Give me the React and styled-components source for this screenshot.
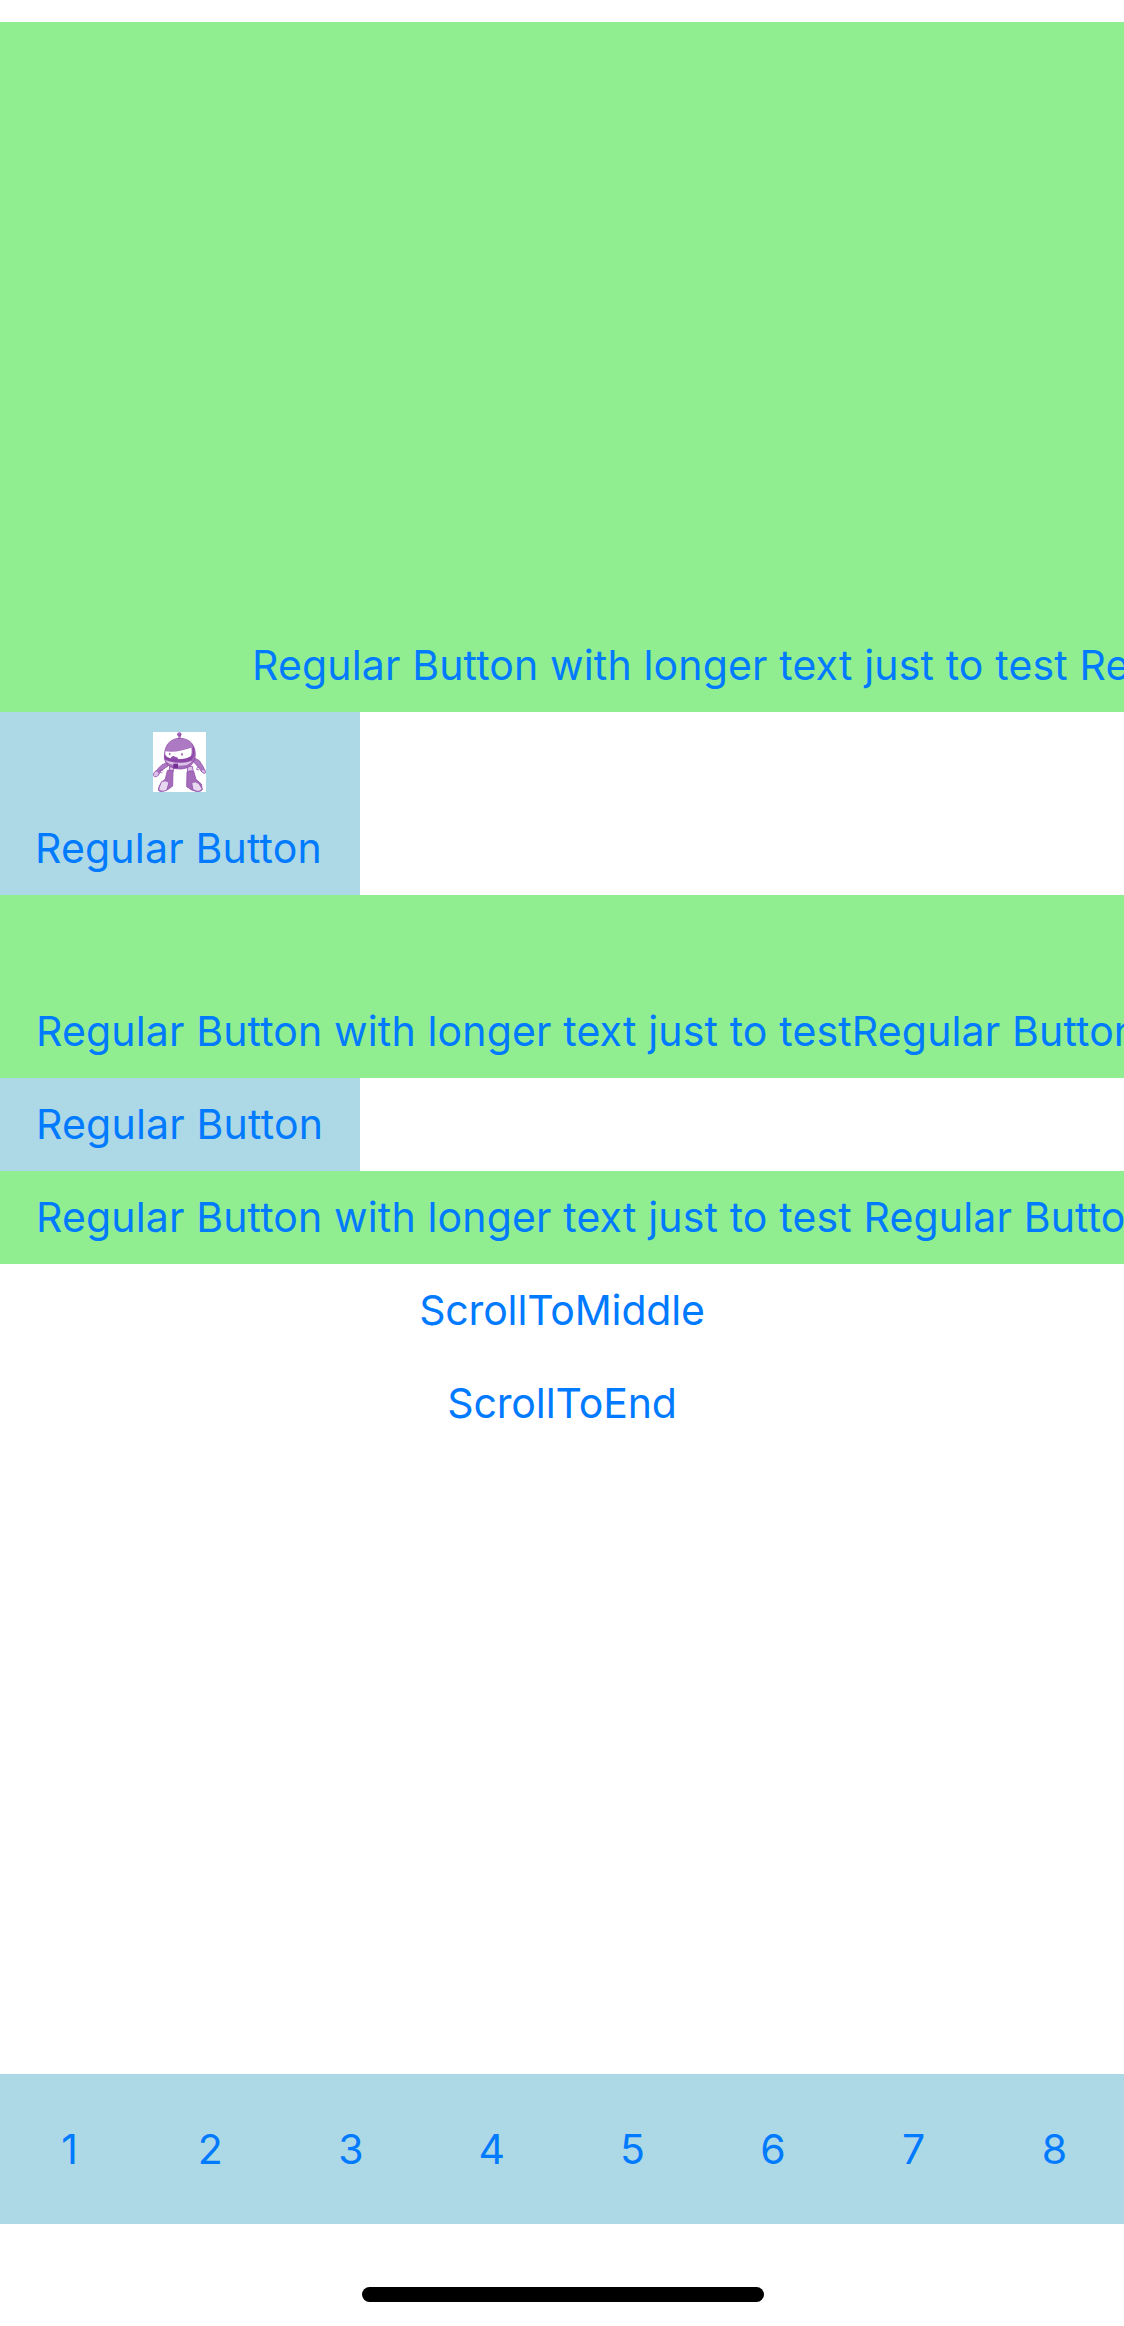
import React from "react";
import styled, { createGlobalStyle } from "styled-components";

const GlobalStyle = createGlobalStyle`
  *, *::before, *::after { box-sizing: border-box; }
  body {
    margin: 0;
    background: #fff;
    font-family: Inter, "Liberation Sans", sans-serif;
  }
`;

const Screen = styled.div`
  display: flex;
  flex-direction: column;
  width: 100%;
  height: 2326px;
  padding-top: 22px;
  overflow: hidden;
  background: #fff;
`;

const Content = styled.main`
  display: flex;
  flex: 1;
  flex-direction: column;
  align-items: flex-start;
  min-height: 0;
`;

const Button = styled.button`
  display: flex;
  flex: none;
  flex-direction: column;
  align-items: ${({ $center }) => ($center ? "center" : "flex-start")};
  justify-content: flex-end;
  width: ${({ $width }) => $width || "100%"};
  height: ${({ $height }) => $height || 93}px;
  padding: 0 0 0 ${({ $indent }) => $indent || 0}px;
  overflow: hidden;
  border: 0;
  background: ${({ $fill }) => $fill || "transparent"};
  color: #007aff;
  font: inherit;
  text-align: left;
`;

const Label = styled.span`
  flex: none;
  font-size: 41px;
  line-height: 93px;
  letter-spacing: ${({ $tracking }) => $tracking ?? 0.15}px;
  white-space: nowrap;
`;

const CaptionLabel = styled(Label)`
  margin-right: 3px;
`;

const RobotIcon = styled.svg`
  display: block;
  flex: none;
  width: 53px;
  height: 60px;
  margin: 0 1px 10px 0;
  background: #fff;
`;

const TabBar = styled.nav`
  display: flex;
  flex: none;
  height: 150px;
  overflow: hidden;
  background: #add8e6;
`;

const Tab = styled.button`
  flex: 0 0 140.7px;
  padding: 0 1.5px 0 0;
  border: 0;
  background: transparent;
  color: #007aff;
  font: inherit;
  font-size: 41px;
  line-height: 150px;
  text-align: center;
`;

const HomeArea = styled.footer`
  display: flex;
  flex: none;
  justify-content: center;
  height: 102px;
  padding: 63px 0 0 2px;
`;

const HomeIndicator = styled.div`
  width: 402px;
  height: 15px;
  border-radius: 8px;
  background: #000;
`;

const GREEN = "#90ee90";
const BLUE = "#add8e6";
const LONG = "Regular Button with longer text just to test";

function Robot() {
  return (
    <RobotIcon viewBox="39 36 159 180" preserveAspectRatio="none" aria-hidden="true">
      <g stroke="#9352ad" strokeWidth="2.5" strokeLinejoin="round">
        <path d="M82 128 66 134 54 146 46 157 55 165 62 153 72 146 84 138Z" fill="#ad79c2" />
        <path d="M47 153q-7 5-7 13 2 6 9 4 7-3 8-9l-2-7Z" fill="#dcc2e6" />
        <path d="m60 148 1 9 6 2m-4-12 6 7" fill="none" />
        <path d="m162 113 16 9 12 19 5 12-9 3-9-12-17-20Z" fill="#ad79c2" />
        <path d="M188 148q9 0 9 10-4 4-8 1l-6-7Z" fill="#dcc2e6" />
        <path d="m173 140-3 8 7 2" fill="none" />
        <path d="M89 139h14l-4 17H87Z" fill="#dcc2e6" />
        <path d="M82 152q9-4 17 0l-1 46q-12 12-28 15-15 4-15-5 4-19 21-31Z" fill="#a36bb9" />
        <path d="M65 184q11-4 22 3l-7 24q-11 5-20 1-5-2-3-8Z" fill="#e8d8ef" />
        <path d="M142 139h15l3 16-17 4Z" fill="#dcc2e6" />
        <path d="M141 156q11-6 20-2l7 24 16 14 3 17q-6 8-19 5-15-3-28-14Z" fill="#a36bb9" />
        <path d="m155 188q13-6 22 3l9 15q-4 10-15 8l-12-5Z" fill="#e8d8ef" />
      </g>
      <path d="M116 60v-12h5v12Z" fill="#c79fd6" stroke="#9b60b2" strokeWidth="2" />
      <circle cx="118" cy="43" r="6.5" fill="#9957b1" />
      <circle cx="117" cy="41" r="2" fill="#b98acb" />
      <path
        d="M73 113C72 75 91 55 120 55s47 20 46 51c-1 26-20 41-46 41-28 0-45-14-47-34Z"
        fill="#a36bb9"
        stroke="#8c46a8"
        strokeWidth="2"
      />
      <path d="M77 93C81 67 98 56 120 56s36 10 38 27c-26 2-47 16-81 10Z" fill="#ad79c2" />
      <path d="M76 94c29 5 52-4 78-11 3 15-1 27-6 32-21 6-50 6-66-3-6-5-7-12-6-18Z" fill="#fff" />
      <path d="M91 115q7-11 14-5 8 0 11 9-13 3-25-4Z" fill="#9352ad" />
      <path d="M72 104c15 17 64 20 87 0l-3 16c-22 11-55 11-82-2Z" fill="#8c46a8" />
      <path d="M76 120c20 10 53 12 80 2-7 13-20 14-36 15-21 0-36-4-44-17Z" fill="#dcc2e6" />
      <path d="M100 131h14v14h-14Z" fill="#743095" />
      <path d="M159 83q5 16-3 30" fill="none" stroke="#8c46a8" strokeWidth="5" />
      <ellipse cx="89" cy="102" rx="2.5" ry="4" fill="#a36bb9" />
      <ellipse cx="126" cy="103" rx="2.5" ry="4.5" fill="#a36bb9" />
    </RobotIcon>
  );
}

export default function App() {
  return (
    <>
      <GlobalStyle />
      <Screen>
        <Content>
          <Button $fill={GREEN} $height={690} $indent={252}>
            <Label>{LONG} {LONG}</Label>
          </Button>
          <Button $fill={BLUE} $height={183} $width="360px" $center>
            <Robot />
            <CaptionLabel $tracking={0.2}>Regular Button</CaptionLabel>
          </Button>
          <Button $fill={GREEN} $height={183} $indent={36}>
            <Label>{LONG}{LONG}</Label>
          </Button>
          <Button $fill={BLUE} $width="360px" $indent={36}>
            <Label $tracking={0.2}>Regular Button</Label>
          </Button>
          <Button $fill={GREEN} $indent={36}>
            <Label>{LONG} {LONG}</Label>
          </Button>
          <Button $center>
            <Label $tracking={-0.15}>ScrollToMiddle</Label>
          </Button>
          <Button $center>
            <Label $tracking={-0.1}>ScrollToEnd</Label>
          </Button>
        </Content>
        <TabBar>
          {[1, 2, 3, 4, 5, 6, 7, 8].map((n) => (
            <Tab key={n}>{n}</Tab>
          ))}
        </TabBar>
        <HomeArea>
          <HomeIndicator />
        </HomeArea>
      </Screen>
    </>
  );
}
